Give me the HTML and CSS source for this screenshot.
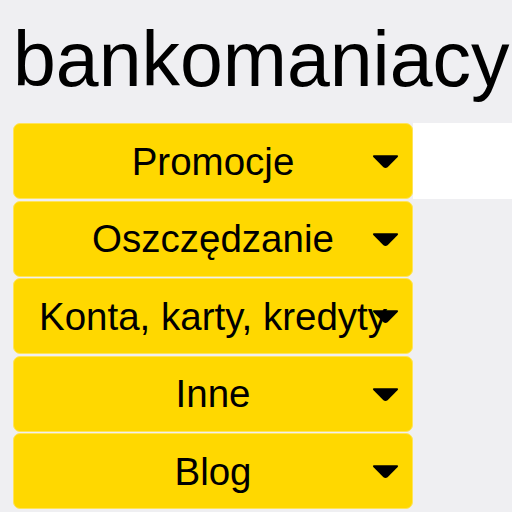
FILE: index.html
```html
<!DOCTYPE html>
<html lang="pl">
<head>
<meta charset="utf-8">
<title>bankomaniacy</title>
<link rel="stylesheet" href="styles.css">
</head>
<body>
<header class="site-header">
  <h1 class="site-title">bankomaniacy</h1>
</header>
<nav class="menu">
  <div class="menu-row menu-row--first">
    <a class="menu-btn" href="#"><span class="menu-label">Promocje</span><svg class="caret" viewBox="0 0 26 14" width="27" height="15"><path d="M2 1 H24 Q26 1 24.5 3 L15 12.5 Q13 14 11 12.5 L1.5 3 Q0 1 2 1 Z"/></svg></a>
    <div class="filler"></div>
  </div>
  <div class="menu-row">
    <a class="menu-btn" href="#"><span class="menu-label">Oszczędzanie</span><svg class="caret" viewBox="0 0 26 14" width="27" height="15"><path d="M2 1 H24 Q26 1 24.5 3 L15 12.5 Q13 14 11 12.5 L1.5 3 Q0 1 2 1 Z"/></svg></a>
  </div>
  <div class="menu-row">
    <a class="menu-btn" href="#"><span class="menu-label">Konta, karty, kredyty</span><svg class="caret" viewBox="0 0 26 14" width="27" height="15"><path d="M2 1 H24 Q26 1 24.5 3 L15 12.5 Q13 14 11 12.5 L1.5 3 Q0 1 2 1 Z"/></svg></a>
  </div>
  <div class="menu-row">
    <a class="menu-btn" href="#"><span class="menu-label">Inne</span><svg class="caret" viewBox="0 0 26 14" width="27" height="15"><path d="M2 1 H24 Q26 1 24.5 3 L15 12.5 Q13 14 11 12.5 L1.5 3 Q0 1 2 1 Z"/></svg></a>
  </div>
  <div class="menu-row">
    <a class="menu-btn" href="#"><span class="menu-label">Blog</span><svg class="caret" viewBox="0 0 26 14" width="27" height="15"><path d="M2 1 H24 Q26 1 24.5 3 L15 12.5 Q13 14 11 12.5 L1.5 3 Q0 1 2 1 Z"/></svg></a>
  </div>
</nav>
</body>
</html>
```
FILE: styles.css
```css
html, body {
  margin: 0;
  padding: 0;
}
body {
  background: #efeff2;
  font-family: "Liberation Sans", Arial, sans-serif;
  color: #000;
  width: 512px;
  height: 512px;
  overflow: hidden;
}
.site-header {
  padding: 15px 0 0 13px;
  height: 123px;
  box-sizing: border-box;
}
.site-title {
  margin: 0;
  font-weight: normal;
  font-size: 77px;
  line-height: 88px;
  white-space: nowrap;
}
.menu {
  display: flex;
  flex-direction: column;
  gap: 1.5px;
}
.menu-row {
  display: flex;
  padding-left: 13px;
}
.menu-row--first .filler {
  flex: 1;
  background: #ffffff;
}
.menu-btn {
  position: relative;
  display: flex;
  align-items: center;
  justify-content: center;
  width: 400px;
  height: 76px;
  box-sizing: border-box;
  background: #ffd800;
  border: 1px solid #ffe45a;
  border-radius: 7px;
  color: #000;
  text-decoration: none;
  font-size: 38.5px;
  white-space: nowrap;
}
.menu-label {
  display: block;
  line-height: 1;
  margin-top: 2px;
}
.caret {
  position: absolute;
  right: 13px;
  top: 30px;
  fill: #000;
}
```
